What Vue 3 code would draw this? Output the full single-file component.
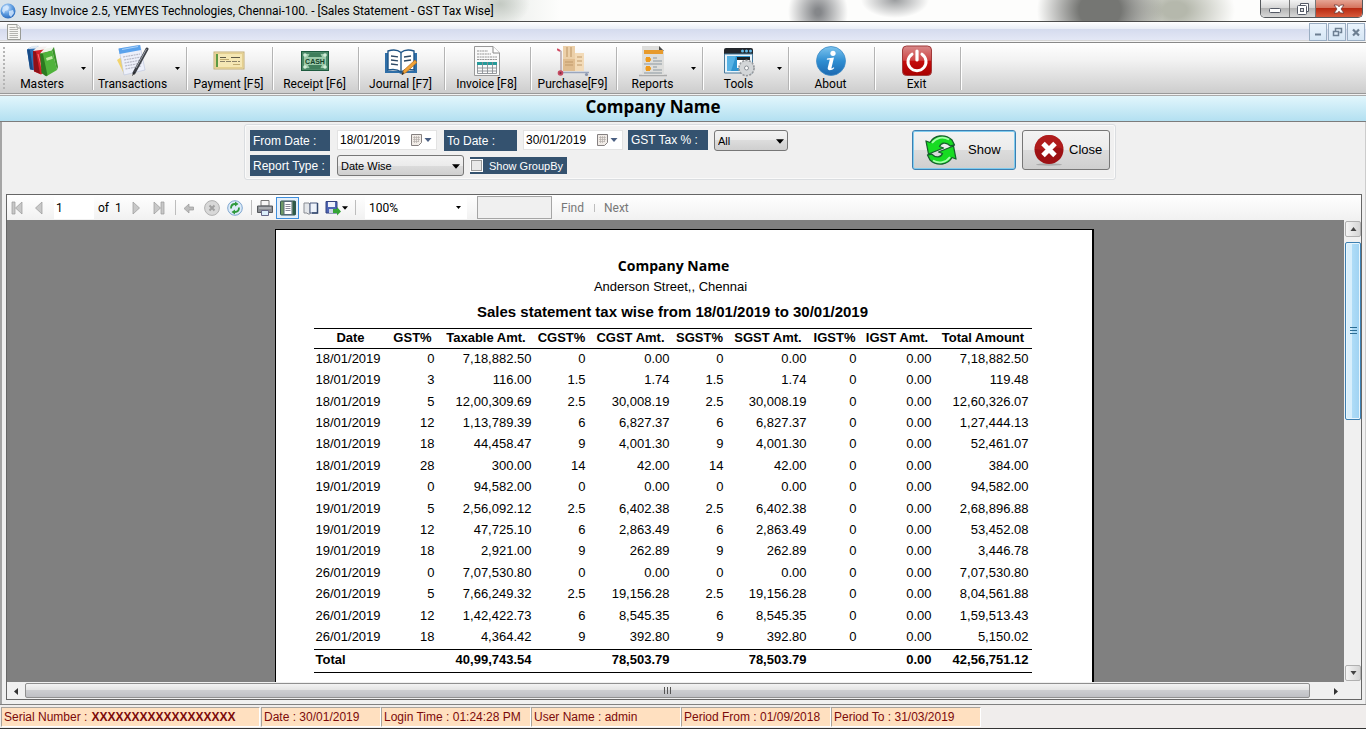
<script setup>
import { ref } from 'vue'

const tools = [
  { id: 'masters', label: 'Masters', menu: true },
  { id: 'transactions', label: 'Transactions', menu: true, wide: true },
  { id: 'payment', label: 'Payment [F5]' },
  { id: 'receipt', label: 'Receipt [F6]' },
  { id: 'journal', label: 'Journal [F7]' },
  { id: 'invoice', label: 'Invoice [F8]' },
  { id: 'purchase', label: 'Purchase[F9]' },
  { id: 'reports', label: 'Reports', menu: true },
  { id: 'tools', label: 'Tools', menu: true },
  { id: 'about', label: 'About' },
  { id: 'exit', label: 'Exit' },
]

const fromDate = ref('18/01/2019')
const toDate = ref('30/01/2019')
const gstTax = ref('All')
const reportType = ref('Date Wise')
const groupBy = ref(false)
const pageNo = ref('1')
const zoom = ref('100%')
const findText = ref('')

const columns = ['Date', 'GST%', 'Taxable Amt.', 'CGST%', 'CGST Amt.', 'SGST%', 'SGST Amt.', 'IGST%', 'IGST Amt.', 'Total Amount']

const rows = [
  ['18/01/2019', '0', '7,18,882.50', '0', '0.00', '0', '0.00', '0', '0.00', '7,18,882.50'],
  ['18/01/2019', '3', '116.00', '1.5', '1.74', '1.5', '1.74', '0', '0.00', '119.48'],
  ['18/01/2019', '5', '12,00,309.69', '2.5', '30,008.19', '2.5', '30,008.19', '0', '0.00', '12,60,326.07'],
  ['18/01/2019', '12', '1,13,789.39', '6', '6,827.37', '6', '6,827.37', '0', '0.00', '1,27,444.13'],
  ['18/01/2019', '18', '44,458.47', '9', '4,001.30', '9', '4,001.30', '0', '0.00', '52,461.07'],
  ['18/01/2019', '28', '300.00', '14', '42.00', '14', '42.00', '0', '0.00', '384.00'],
  ['19/01/2019', '0', '94,582.00', '0', '0.00', '0', '0.00', '0', '0.00', '94,582.00'],
  ['19/01/2019', '5', '2,56,092.12', '2.5', '6,402.38', '2.5', '6,402.38', '0', '0.00', '2,68,896.88'],
  ['19/01/2019', '12', '47,725.10', '6', '2,863.49', '6', '2,863.49', '0', '0.00', '53,452.08'],
  ['19/01/2019', '18', '2,921.00', '9', '262.89', '9', '262.89', '0', '0.00', '3,446.78'],
  ['26/01/2019', '0', '7,07,530.80', '0', '0.00', '0', '0.00', '0', '0.00', '7,07,530.80'],
  ['26/01/2019', '5', '7,66,249.32', '2.5', '19,156.28', '2.5', '19,156.28', '0', '0.00', '8,04,561.88'],
  ['26/01/2019', '12', '1,42,422.73', '6', '8,545.35', '6', '8,545.35', '0', '0.00', '1,59,513.43'],
  ['26/01/2019', '18', '4,364.42', '9', '392.80', '9', '392.80', '0', '0.00', '5,150.02'],
]

const totals = ['Total', '', '40,99,743.54', '', '78,503.79', '', '78,503.79', '', '0.00', '42,56,751.12']
</script>

<template>
  <div class="window">
    <header class="titlebar">
      <svg class="app-icon" viewBox="0 0 16 16" aria-hidden="true">
        <defs>
          <radialGradient id="globe" cx=".4" cy=".3" r=".8">
            <stop offset="0" stop-color="#cfe6ff" />
            <stop offset=".5" stop-color="#5b9be0" />
            <stop offset="1" stop-color="#1f5fb4" />
          </radialGradient>
        </defs>
        <circle cx="8" cy="8" r="7.5" fill="url(#globe)" />
        <path d="M3 4l4-2 2 2-1 3-3 1-1 3-2-3zM9 8l4-1 1 3-3 4-2-2z" fill="#d8ebff" opacity=".8" />
      </svg>
      <h1>Easy Invoice 2.5, YEMYES Technologies, Chennai-100. - [Sales Statement - GST Tax Wise]</h1>
      <div class="caption">
        <button type="button" class="cap-min" aria-label="Minimize">
          <svg viewBox="0 0 14 14"><rect x="1.5" y="6.5" width="11" height="4" rx="1" fill="#fff" stroke="#555a66" /></svg>
        </button>
        <button type="button" class="cap-max" aria-label="Restore">
          <svg viewBox="0 0 14 14">
            <path d="M4.500 3.500V1.500h8v8h-2" fill="#fff" stroke="#555a66" />
            <rect x="1.500" y="3.500" width="9" height="9" rx="1" fill="#fff" stroke="#555a66" />
            <rect x="4.500" y="6.500" width="3" height="3" fill="#ddd" stroke="#555a66" />
          </svg>
        </button>
        <button type="button" class="cap-close" aria-label="Close window">
          <svg viewBox="0 0 14 14"><path d="M2 3h3.500L7 4.800 8.500 3H12L9 7l3 4H8.500L7 9.200 5.500 11H2l3-4z" fill="#fff" stroke="#6b3a38" stroke-width=".8" /></svg>
        </button>
      </div>
    </header>

    <div class="menubar">
      <svg class="doc-icon" viewBox="0 0 14 16" aria-hidden="true">
        <path d="M.5.5h9.500l3.500 3.500v11.500H.5z" fill="#f6f6f3" stroke="#999b96" />
        <path d="M10 .5V4h3.500" fill="#fff" stroke="#999b96" />
        <path d="M2.500 3.500h6M2.500 5.500h8.500M2.500 7.500h8.500M2.500 9.500h8.500M2.500 11.500h8.500M2.500 13.500h8.500" stroke="#b4b4b0" />
      </svg>
      <div class="mdi">
        <button type="button" aria-label="Minimize document">
          <svg viewBox="0 0 16 16"><path d="M5 10.500h6" stroke="#6d7f92" stroke-width="2" /></svg>
        </button>
        <button type="button" aria-label="Restore document">
          <svg viewBox="0 0 16 16"><path d="M6.500 7V4.500h6v4H10.500" fill="none" stroke="#6d7f92" stroke-width="1.500" /><path d="M4.500 7.500h5v4h-5z" fill="none" stroke="#6d7f92" stroke-width="1.500" /></svg>
        </button>
        <button type="button" aria-label="Close document">
          <svg viewBox="0 0 16 16"><path d="M5 5.500l6 6M11 5.500l-6 6" stroke="#6d7f92" stroke-width="2.200" /></svg>
        </button>
      </div>
    </div>

    <nav class="toolbar">
      <span class="grip"></span>
      <button v-for="t in tools" :key="t.id" type="button" class="tool" :class="{ wide: t.wide }">
        <span class="face">
          <svg v-if="t.id === 'masters'" viewBox="0 0 32 32">
            <path d="M1 4.500L5 2l7-1 6 22-6 3-8-1.500z" fill="#2d6fb5" /><path d="M2 4l4-3 7-.5-3 3z" fill="#dfe9f3" /><path d="M1 4.500l3 .5 3 20-3-1z" fill="#174a86" />
            <path d="M7 6l11-2.500 6 20-9 6-7-3z" fill="#d3202a" /><path d="M7 6l4-4 10-.5-3 3z" fill="#f4f0ee" /><path d="M7 6l3 .8 4 22-6-2.500z" fill="#8e1118" /><path d="M12 9l4 15" stroke="#ff7474" />
            <path d="M14 8.500L26 5l5 20-11 6.500z" fill="#4fb33b" /><path d="M14 8.500L18 4l10-2-2 3.200z" fill="#eef4ea" /><path d="M14 8.500l3 .5 4.500 21.500-2 .5-4-3z" fill="#2c7a20" />
            <path d="M26 5l2-3 4 20-1 3z" fill="#3c952b" /><path d="M20 13l6-2 .8 2.800-6 2z" fill="#c4eba9" />
          </svg>
          <svg v-else-if="t.id === 'transactions'" viewBox="0 0 32 32">
            <path d="M0 15l6-4 4 17-3 1z" fill="#f3d46c" />
            <path d="M2 4l21-4 5 25-21 5z" fill="#edf0fa" stroke="#b9c2dc" stroke-width=".6" />
            <path d="M1.500 3.500L23 0l1 5-21.500 4z" fill="#5aa2ec" /><path d="M5 4.500l16-3" stroke="#a9d2fa" stroke-width="1.200" />
            <path d="M6 12l17-3M7 15l17-3M7.500 18l17-3M8 21l17-3M8.500 24l16-3" stroke="#b7b9c6" stroke-width="1.200" stroke-dasharray="2 .7" />
            <path d="M30 4L17 28" stroke="#3d4046" stroke-width="3" stroke-linecap="round" /><path d="M29.500 4L19 23" stroke="#9da2ab" stroke-width="1" /><path d="M17.500 27l-2 3.500" stroke="#222" stroke-width="1" />
          </svg>
          <svg v-else-if="t.id === 'payment'" viewBox="0 0 32 32">
            <rect x="1" y="7" width="30" height="17" fill="#f5e7b4" stroke="#c4ae76" /><rect x="2.500" y="8.500" width="27" height="14" fill="none" stroke="#e5d090" />
            <path d="M4 9v13" stroke="#5c9a45" stroke-width="2" /><path d="M7 12.500h6M18 12.500h9" stroke="#5f5a47" stroke-width="1.200" /><path d="M7 16.500h20" stroke="#8a8168" stroke-dasharray="5 1" /><path d="M7 14.500h9M20 19.500h7" stroke="#c0ab70" />
          </svg>
          <svg v-else-if="t.id === 'receipt'" viewBox="0 0 32 32">
            <rect x="2.500" y="6.500" width="27" height="19" fill="#4b8a68" stroke="#1d5a3e" /><rect x="5" y="9" width="22" height="14" fill="#9ccaaa" />
            <path d="M11 8h10l2 4H9zM9 20h14l-2 4H11z" fill="#3f7e5b" />
            <circle cx="6" cy="10" r="1.800" fill="#d1ecd7" /><circle cx="26" cy="10" r="1.800" fill="#d1ecd7" /><circle cx="6" cy="22" r="1.800" fill="#d1ecd7" /><circle cx="26" cy="22" r="1.800" fill="#d1ecd7" />
            <text x="16" y="18.500" class="cash" text-anchor="middle">CASH</text>
          </svg>
          <svg v-else-if="t.id === 'journal'" viewBox="0 0 32 32">
            <path d="M0 8h3v18h26V8h3v20H18l-2 1-2-1H0z" fill="#2f6fa8" />
            <path d="M3 6c5-1.500 10-1 13 1.500C19 5 24 4.500 29 6v19c-5-1-10-.5-13 2-3-2.500-8-3-13-2z" fill="#fff" stroke="#1f5688" stroke-width="1.400" />
            <path d="M16 7.500V27" stroke="#1f5688" stroke-width="1.400" />
            <path d="M6 11l7 .8M6 15l7 .8M6 19l7 .8M19 12l7-1M19 16l7-1" stroke="#2d4965" stroke-width="1.300" />
            <path d="M30 15l2 2.500-11 10-4 2 1.500-4z" fill="#f0a338" stroke="#b36a1a" stroke-width=".7" /><path d="M17 29.500l1.500-2" stroke="#333" stroke-width="1.500" />
          </svg>
          <svg v-else-if="t.id === 'invoice'" viewBox="0 0 32 32">
            <path d="M3.500 1.500H22l6.500 6.500v22.500h-25z" fill="#fafafa" stroke="#999" /><path d="M22 1.500V8h6.500" fill="#fff" stroke="#888" />
            <path d="M6 6h11M6 9h14M6 12h20M6 14.500h20" stroke="#929292" stroke-dasharray="2 .6" />
            <rect x="6" y="17" width="20" height="3" fill="#269a9a" />
            <path d="M6.500 20v8.500h19V20M6 23h20M6 26h20M11.500 17v11.500M16.500 17v11.500M21.500 17v11.500" fill="none" stroke="#8a8f94" stroke-width=".9" />
          </svg>
          <svg v-else-if="t.id === 'purchase'" viewBox="0 0 32 32">
            <path d="M6 1h12v13H6z" fill="#ecd0a9" /><path d="M6 14h12v12H6z" fill="#e0bd90" /><path d="M18 8h9v18h-9z" fill="#f3dbb8" />
            <path d="M10 2v10M14 2v10M8 17h8M8 20h8M20 12h5M20 16h5M20 20h5" stroke="#c09a6b" stroke-width="1.100" />
            <path d="M1 4.500l3 2V27" fill="none" stroke="#b7a6ad" stroke-width="1.500" /><path d="M0 4l3 2" stroke="#d34b63" stroke-width="2" />
            <path d="M4 27.500h28" stroke="#9aa6be" stroke-width="1.500" /><circle cx="3.500" cy="28" r="2.800" fill="#c64b62" /><circle cx="3.500" cy="28" r="1" fill="#7b2b3d" /><circle cx="29.500" cy="29.500" r="1.600" fill="#8994ab" />
          </svg>
          <svg v-else-if="t.id === 'reports'" viewBox="0 0 32 32">
            <path d="M2 30.500h28" stroke="#aaa" stroke-width="1.500" />
            <path d="M5 1h17l5 5v24H5z" fill="#dededc" /><path d="M22 1l5 5h-5z" fill="#4c4c4c" />
            <path d="M7 5h19v4H7z" fill="#e79a2c" />
            <path d="M9 12h4v5H9zM9 21h4v5H9z" fill="#ef9a1c" /><path d="M8.500 14.500h5.500M8.500 23.500h5.500" stroke="#ef9a1c" stroke-width="2.500" />
            <path d="M16 13h4M16 16h9M7 19h18M16 22h4M16 25h9M7 28h18" stroke="#8b97a0" />
          </svg>
          <svg v-else-if="t.id === 'tools'" viewBox="0 0 32 32">
            <path d="M1 5a2 2 0 012-2h25a2 2 0 012 2v4H1z" fill="#23262b" /><circle cx="19.500" cy="6" r="1.500" fill="#62b9e8" /><circle cx="23.500" cy="6" r="1.500" fill="#62b9e8" /><circle cx="27.500" cy="6" r="1.500" fill="#62b9e8" />
            <path d="M1.500 9h28v19h-28z" fill="#e9f4fb" stroke="#47799b" /><path d="M4 11h23v15H4z" fill="#2f95d0" /><path d="M4 11h9L8 26H4z" fill="#57b2e4" />
            <path d="M14 12h13v3H14z" fill="#1d2126" /><path d="M14 15h13v8H14z" fill="#fff" />
            <circle cx="23.500" cy="23" r="7.500" fill="#cfd2d4" stroke="#96999d" stroke-width="1.800" stroke-dasharray="2.200 1.200" /><circle cx="23.500" cy="23" r="6.800" fill="#d3d6d8" /><circle cx="23.500" cy="23" r="2" fill="#fff" stroke="#8b9197" />
          </svg>
          <svg v-else-if="t.id === 'about'" viewBox="0 0 32 32">
            <defs><linearGradient id="info" x1="0" y1="0" x2="0" y2="1"><stop offset="0" stop-color="#7dc4ee" /><stop offset=".5" stop-color="#2f8ed2" /><stop offset="1" stop-color="#1c68b0" /></linearGradient></defs>
            <circle cx="16" cy="16" r="14.500" fill="url(#info)" stroke="#3e8cc6" stroke-width=".8" />
            <circle cx="18" cy="8.300" r="2.600" fill="#fff" /><path d="M12 13.500l7-1-2.500 10.300c-.2 1 .8.800 2.300-.5l.5.800c-2.200 2.700-7.500 3.500-6.500-.5l2-8-3 .2z" fill="#fff" />
          </svg>
          <svg v-else viewBox="0 0 32 32">
            <defs><linearGradient id="power" x1="0" y1="0" x2="0" y2="1"><stop offset="0" stop-color="#d88a8a" /><stop offset=".48" stop-color="#cf4545" /><stop offset=".52" stop-color="#c40c0c" /><stop offset="1" stop-color="#a80000" /></linearGradient></defs>
            <rect x="1.500" y="1" width="29" height="29.500" rx="4" fill="url(#power)" stroke="#a03a3a" />
            <path d="M11 9.200a9 9 0 1010 0" fill="none" stroke="#fff" stroke-width="3" stroke-linecap="round" /><path d="M16 6v9" stroke="#fff" stroke-width="3.200" stroke-linecap="round" />
          </svg>
          <span>{{ t.label }}</span>
        </span>
        <span v-if="t.menu" class="drop"><svg viewBox="0 0 5 3"><path d="M0 0h5L2.500 3z" /></svg></span>
      </button>
    </nav>

    <div class="company">Company Name</div>

    <main class="work">
      <form class="filters" @submit.prevent>
        <div class="fields">
          <div class="line">
            <label for="from" class="tag">From Date :</label>
            <span class="date"><input id="from" v-model="fromDate" type="text" /><button type="button" aria-label="Open from-date calendar"><svg viewBox="0 0 22 12"><path d="M.5.5h10v8l-3 3h-7z" fill="#f1ece7" stroke="#858080" /><path d="M2 3.500h7M2 5.500h7M2 7.500h6M3.500 2v7M5.500 2v7M7.500 2v6" stroke="#b5afab" stroke-width=".7" /><path d="M13.500 4h7L17 8z" fill="#4a5f82" /></svg></button></span>
            <label for="to" class="tag to">To Date :</label>
            <span class="date"><input id="to" v-model="toDate" type="text" /><button type="button" aria-label="Open to-date calendar"><svg viewBox="0 0 22 12"><path d="M.5.5h10v8l-3 3h-7z" fill="#f1ece7" stroke="#858080" /><path d="M2 3.500h7M2 5.500h7M2 7.500h6M3.500 2v7M5.500 2v7M7.500 2v6" stroke="#b5afab" stroke-width=".7" /><path d="M13.500 4h7L17 8z" fill="#4a5f82" /></svg></button></span>
            <label for="gst" class="tag gst">GST Tax % :</label>
            <span class="combo small"><select id="gst" v-model="gstTax"><option>All</option></select><svg viewBox="0 0 7 4"><path d="M0 0h7L3.500 4z" /></svg></span>
          </div>
          <div class="line">
            <label for="rtype" class="tag">Report Type :</label>
            <span class="combo"><select id="rtype" v-model="reportType"><option>Date Wise</option></select><svg viewBox="0 0 7 4"><path d="M0 0h7L3.500 4z" /></svg></span>
            <label class="check"><input v-model="groupBy" type="checkbox" />Show GroupBy</label>
          </div>
        </div>
        <div class="actions">
          <button type="submit" class="act show">
            <svg viewBox="0 0 32 32">
              <g id="turn">
                <path d="M1 7l4 1.500C9 1 20-.5 27 6l2.500 5-4 1C21 7.500 16 8.500 14.500 12.500l4 1.500L3.500 20z" fill="#17dc22" stroke="#14602a" stroke-width="1.300" stroke-linejoin="round" />
                <path d="M7 9C11 3.500 18 2 24 5.500" fill="none" stroke="#a5ffaa" stroke-width="1.800" />
              </g>
              <use href="#turn" transform="rotate(180 16 16)" />
            </svg>
            <span>Show</span>
          </button>
          <button type="button" class="act close">
            <svg viewBox="0 0 32 32">
              <ellipse cx="16" cy="30.500" rx="13" ry="1.200" fill="#aaa" />
              <circle cx="16" cy="15.500" r="14.500" fill="#9d1114" /><path d="M2 15a14 14 0 0128 0c-8-4-18 3-28 0z" fill="#b8211f" opacity=".7" />
              <path d="M10 9.500l12 12M22 9.500l-12 12" stroke="#fff" stroke-width="5" />
            </svg>
            <span>Close</span>
          </button>
        </div>
      </form>

      <section class="viewer">
        <div class="vbar">
          <button type="button" class="vb first" aria-label="First page"><svg viewBox="0 0 16 16"><path d="M3 2h3v12H3zM13 2v12L6.500 8z" fill="#c8c8c8" stroke="#999" stroke-width=".7" /></svg></button>
          <button type="button" class="vb" aria-label="Previous page"><svg viewBox="0 0 16 16"><path d="M11 2v12L4.500 8z" fill="#c8c8c8" stroke="#999" stroke-width=".7" /></svg></button>
          <input v-model="pageNo" class="pageno" type="text" aria-label="Current page" />
          <span class="of">of&nbsp; 1</span>
          <button type="button" class="vb" aria-label="Next page"><svg viewBox="0 0 16 16"><path d="M5 2v12l6.500-6z" fill="#c8c8c8" stroke="#999" stroke-width=".7" /></svg></button>
          <button type="button" class="vb" aria-label="Last page"><svg viewBox="0 0 16 16"><path d="M10 2h3v12h-3zM3 2v12l6.500-6z" fill="#c8c8c8" stroke="#999" stroke-width=".7" /></svg></button>
          <i class="vsep"></i>
          <button type="button" class="vb" aria-label="Back"><svg viewBox="0 0 16 16"><path d="M3 8.500l5-4.500v3h4.500v3H8v3z" fill="#bdbdbd" stroke="#999" stroke-width=".7" /></svg></button>
          <button type="button" class="vb" aria-label="Stop"><svg viewBox="0 0 16 16"><circle cx="8" cy="8" r="7.400" fill="#d8d8d8" stroke="#b0b0b0" /><path d="M5.500 5.500l5 5M10.500 5.500l-5 5" stroke="#a0a0a0" stroke-width="2" /></svg></button>
          <button type="button" class="vb" aria-label="Refresh"><svg viewBox="0 0 16 16"><circle cx="8" cy="8" r="7.300" fill="#dcebf8" stroke="#7fa6d0" /><path d="M4 8.500c0-3 2-4.500 4-4.500M12 7.500c0 3-2 4.500-4 4.500" fill="none" stroke="#2f9a3d" stroke-width="1.800" /><path d="M8 1.500L11.500 4 8 6.500zM8 9.500v5L4.500 12z" fill="#2f9a3d" /></svg></button>
          <i class="vsep"></i>
          <button type="button" class="vb" aria-label="Print"><svg viewBox="0 0 16 16"><path d="M4 .5h8V6H4z" fill="#f7f7f7" stroke="#777" /><path d="M.5 6h15v6.500H.5z" fill="#8a8d92" stroke="#55585c" /><path d="M2 8h12" stroke="#c9cbce" /><path d="M4.500 10.500h7v5h-7z" fill="#dbeefa" stroke="#668" /></svg></button>
          <button type="button" class="vb on" aria-label="Print layout"><svg viewBox="0 0 16 16"><rect x=".5" y="1" width="15" height="14" rx="1" fill="#6f9a66" stroke="#355" /><path d="M13 1h2.500v14H13z" fill="#2f5a4a" /><path d="M4 1.500h8v13H4z" fill="#fff" stroke="#567" /><path d="M5.500 4.500h5M5.500 6.500h5M5.500 8.500h5M5.500 10.500h5" stroke="#889" /></svg></button>
          <button type="button" class="vb" aria-label="Page setup"><svg viewBox="0 0 16 16"><path d="M1 3h5l1 2v9H5l-1-1H1z" fill="#e3e6ea" stroke="#8a8d94" /><path d="M7 3h7.500v10H7z" fill="#edf2fa" stroke="#4c5d80" /><path d="M14.500 3v10H9" fill="none" stroke="#33486f" stroke-width="1.500" /></svg></button>
          <button type="button" class="vb export" aria-label="Export"><svg viewBox="0 0 16 16"><path d="M1 1.500h11V13H1z" fill="#4d64b5" stroke="#34437f" /><path d="M3 2h7v5H3z" fill="#eef1fb" /><path d="M4 9h6v4H4z" fill="#cdd3e8" /><path d="M8 9h4V7l4 4.500-4 4V13H8z" fill="#35a537" /></svg><svg class="tiny" viewBox="0 0 5 3"><path d="M0 0h5L2.500 3z" /></svg></button>
          <i class="vsep"></i>
          <span class="zoom"><select v-model="zoom" aria-label="Zoom"><option>100%</option></select><svg viewBox="0 0 5 3"><path d="M0 0h5L2.500 3z" /></svg></span>
          <input v-model="findText" class="find" type="text" aria-label="Find text" />
          <button type="button" class="link">Find</button>
          <i class="vsep short"></i>
          <button type="button" class="link">Next</button>
        </div>

        <div class="stage">
          <div class="canvas">
            <article class="page">
              <h2>Company Name</h2>
              <p>Anderson Street,, Chennai</p>
              <h3>Sales statement tax wise from 18/01/2019 to 30/01/2019</h3>
              <table>
                <colgroup><col v-for="(c, i) in columns" :key="c" :class="'c' + i" /></colgroup>
                <thead><tr><th v-for="c in columns" :key="c" scope="col">{{ c }}</th></tr></thead>
                <tbody><tr v-for="(r, i) in rows" :key="i"><td v-for="(v, j) in r" :key="j">{{ v }}</td></tr></tbody>
                <tfoot><tr><td v-for="(v, j) in totals" :key="j">{{ v }}</td></tr></tfoot>
              </table>
            </article>
          </div>
          <div class="vscroll">
            <button type="button" aria-label="Scroll up"><svg viewBox="0 0 6 4"><path d="M0 4h6L3 0z" /></svg></button>
            <div class="vtrack"><div class="vthumb"><i></i><i></i><i></i></div></div>
            <button type="button" aria-label="Scroll down"><svg viewBox="0 0 6 4"><path d="M0 0h6L3 4z" /></svg></button>
          </div>
        </div>
        <div class="hscroll">
          <button type="button" aria-label="Scroll left"><svg viewBox="0 0 4 7"><path d="M4 0v7L0 3.500z" /></svg></button>
          <div class="htrack"><div class="hthumb"><i></i><i></i><i></i></div></div>
          <button type="button" aria-label="Scroll right"><svg viewBox="0 0 4 7"><path d="M0 0v7l4-3.500z" /></svg></button>
        </div>
      </section>
    </main>

    <footer class="status">
      <span class="s1">Serial Number :<b>XXXXXXXXXXXXXXXXXX</b></span>
      <span class="s2">Date : 30/01/2019</span>
      <span class="s3">Login Time : 01:24:28 PM</span>
      <span class="s3">User Name : admin</span>
      <span class="s3">Period From : 01/09/2018</span>
      <span class="s3">Period To : 31/03/2019</span>
    </footer>
  </div>
</template>

<style>
body { margin: 0; background: #f0f0f0; }
</style>

<style scoped>
* { box-sizing: border-box; }
button, input, select { font: inherit; color: inherit; margin: 0; padding: 0; border: 0; border-radius: 0; background: none; min-width: 0; }
select { appearance: none; }
svg { display: block; flex: none; }
.window { display: flex; flex-direction: column; height: 100vh; overflow: hidden; background: #f0f0f0; color: #000; font: 12px/16px Roboto, "Open Sans", sans-serif; border-bottom: 1px solid #333; }

.titlebar { flex: none; display: flex; align-items: center; height: 22px; border-bottom: 1px solid #4c4c4c;
  background:
    radial-gradient(30px 22px at 500px 4px, #c3c9c2, transparent),
    radial-gradient(30px 34px at 818px 12px, #85878a 10%, transparent),
    radial-gradient(34px 18px at 895px 0, #9b9d9f, transparent),
    radial-gradient(70px 60px at 1100px 10px, #757673 30%, transparent 90%),
    radial-gradient(60px 40px at 1175px 10px, #b5b8ac 20%, transparent),
    linear-gradient(90deg, #d7e2ea 0, #d9dedb 300px, #e2e6e2 470px, #fdfdfc 560px); }
.app-icon { width: 16px; height: 16px; }
.titlebar h1 { margin: 0 0 0 6px; font-size: 12px; font-weight: 400; line-height: 20px; white-space: nowrap; }
.caption { display: flex; align-self: flex-start; margin: 0 3px 0 auto; border: 1px solid #55585c; border-top: 0; border-radius: 0 0 5px 5px; overflow: hidden; }
.caption button { width: 28px; height: 17px; display: grid; place-items: center; background: linear-gradient(#f3f3f3, #d3d3d3 50%, #b4b4b4 50%, #d8d8d8); }
.caption svg { width: 14px; height: 14px; }
.caption .cap-max { width: 27px; border: solid #777; border-width: 0 1px; }
.caption .cap-close { width: 46px; background: linear-gradient(#e6a594, #d5745e 45%, #b92b12 50%, #d7593a); }

.menubar { flex: none; display: flex; align-items: center; justify-content: space-between; height: 21px; padding: 0 1px 1px 7px; background: linear-gradient(#fff, #e9edf6 35%, #d5dbee 36%, #e3e7f5 88%, #aaa 89%, #f4f4f4 95%); border-bottom: 1px solid #888; }
.doc-icon { width: 14px; height: 16px; }
.mdi { display: flex; gap: 1px; }
.mdi button { width: 18px; height: 18px; border: 1px solid #9aadc2; background: linear-gradient(#eaf3fc, #d6e6f5); }
.mdi svg { width: 16px; height: 16px; }

.toolbar { flex: none; display: flex; height: 51px; padding: 4px 4px 3px 2px; background: linear-gradient(#fff, #f2f2f2 35%, #cdcdcd); border-bottom: 1px solid #999; }
.grip { width: 2px; margin: 0 2px 0 1px; background: repeating-linear-gradient(#b5b5b5 0 2px, transparent 2px 4px); }
.tool { display: flex; width: 86px; padding-right: 4px; border-right: 1px solid #fff; box-shadow: inset -1px 0 #b4b4b4; }
.tool:first-of-type { width: 87px; }
.tool.wide { width: 94px; }
.face { flex: 1; display: flex; flex-direction: column; align-items: center; margin-top: -2px; white-space: nowrap; }
.face svg { width: 32px; height: 32px; }
.face > span { line-height: 15px; }
.drop { width: 12px; display: grid; place-items: center; }
.drop svg { width: 5px; height: 3px; }
.cash { font: bold 7px "Liberation Sans", sans-serif; fill: #123f28; }

.company { flex: none; height: 27px; margin-top: 1px; border: solid; border-width: 1px 0; border-color: #aaa transparent #7c7c7c; background: linear-gradient(#e2f6fc, #b3e0f1); text-align: center; padding-right: 60px; font: bold 17px/22px "Open Sans", sans-serif; }

.work { flex: 1; min-height: 0; display: flex; flex-direction: column; padding: 2px 3px 4px 4px; border-left: 2px solid #a5a5a5; border-right: 1px solid #ccc; background: #f0f0f0; }
.filters { flex: none; align-self: center; display: flex; justify-content: space-between; width: 872px; max-width: 100%; margin: 0 8px 14px 0; height: 56px; padding: 5px 5px 4px; border: 1px solid #dadde0; border-radius: 3px; box-shadow: inset 0 0 0 1px #fafafa; font: 12px/16px "Liberation Sans", Arial, sans-serif; }
.fields { display: flex; flex-direction: column; gap: 4px; }
.line { display: flex; height: 21px; }
.tag { display: flex; align-items: center; width: 80px; height: 21px; padding-left: 3px; background: #34526f; color: #fff; white-space: nowrap; }
.tag.to { width: 73px; margin-left: 7px; }
.tag.gst { margin-left: 5px; height: 20px; }
.line .date { display: flex; align-items: center; width: 100px; height: 20px; margin-left: 7px; padding: 0 3px 0 2px; background: #fff; border: 1px solid #e3e3e3; }
.line .tag.to + .date { margin-left: 6px; }
.date input { flex: 1; width: 0; }
.date svg { width: 22px; height: 12px; }
.combo { position: relative; display: flex; width: 127px; height: 21px; margin-left: 7px; font-size: 11px; }
.combo.small { width: 74px; margin-left: 6px; }
.combo select { flex: 1; padding-left: 3px; border: 1px solid #777; border-radius: 3px; background: linear-gradient(#f3f3f3, #ebebeb 50%, #dcdcdc 50%, #cfcfcf); }
.combo svg { position: absolute; right: 4px; top: 9px; width: 8px; height: 5px; pointer-events: none; }
.check { display: flex; align-items: center; align-self: center; height: 17px; width: 97px; margin-left: 6px; background: #34526f; color: #fff; font-size: 11px; white-space: nowrap; }
.check input { appearance: none; flex: none; width: 13px; height: 13px; margin: 0 6px 0 0; border: 1px solid #fff; box-shadow: inset 0 0 0 1px #9a9a9a; background: #e8e8e8; }
.actions { display: flex; gap: 6px; align-items: flex-start; }
.act { display: flex; align-items: center; height: 40px; border: 1px solid #777; border-radius: 3px; background: linear-gradient(#f3f3f3, #ebebeb 50%, #dcdcdc 50%, #cfcfcf); font-size: 13px; }
.act svg { width: 32px; height: 32px; }
.act.show { width: 104px; padding-left: 12px; gap: 11px; border-color: #3c7fb1; box-shadow: inset 0 0 0 1px #7fcbee; }
.act.close { width: 88px; padding-left: 10px; gap: 4px; }

.viewer { flex: 1; min-height: 0; display: flex; flex-direction: column; border: 1px solid #666; }
.vbar { flex: none; display: flex; align-items: center; height: 25px; background: linear-gradient(#fff, #f1f1f1); }
.vb { display: grid; place-items: center; width: 23px; height: 22px; }
.vb.first { width: 20px; }
.vb svg { width: 16px; height: 16px; }
.vb.on { border: 1px solid #3f8edc; background: #e4effa; }
.vb.export { display: flex; align-items: center; width: 28px; gap: 1px; padding-left: 3px; }
.vb .tiny { width: 6px; height: 4px; }
.pageno { width: 40px; height: 23px; margin-left: 4px; padding-left: 2px; background: #fff; }
.of { width: 26px; margin: 0 0 0 4px; white-space: nowrap; }
.vsep { width: 1px; height: 15px; margin: 0 1px 0 5px; background: #bdbdbd; }
.vsep.short { height: 8px; margin: 0 9px 0 10px; }
.zoom { position: relative; display: flex; width: 102px; height: 23px; margin-left: 8px; background: #fff; }
.zoom select { flex: 1; padding-left: 4px; }
.zoom svg { position: absolute; right: 6px; top: 10px; width: 5px; height: 3px; pointer-events: none; }
.find { width: 75px; height: 23px; margin: 0 9px 0 10px; border: 1px solid #a5a5a5; background: #f0f0f0; }
.link { color: #777; }

.stage { flex: 1; min-height: 0; display: flex; }
.canvas { flex: 1; min-width: 0; overflow: hidden; padding: 9px 0 0 17px; background: #808080; }
.page { width: 819px; max-width: 100%; min-height: 1056px; margin: 0 auto; padding: 26px 38px; background: #fff; border: 1px solid #000; border-right-width: 2px; font: 13px/16px "Liberation Sans", Arial, sans-serif; }
.page h2 { margin: 0; padding-right: 20px; text-align: center; font: bold 14px/20px "Open Sans", sans-serif; }
.page p { margin: 2px 0 0; padding-right: 26px; text-align: center; line-height: 18px; }
.page h3 { margin: 6px 0 0; padding-right: 22px; text-align: center; font-size: 15px; line-height: 20px; white-space: nowrap; }
table { width: 718px; height: 345px; margin-top: 6px; table-layout: fixed; border-collapse: collapse; border-bottom: 1px solid #000; }
.c0 { width: 74px; }
.c1, .c7 { width: 50px; }
.c2, .c9 { width: 97px; }
.c3, .c5 { width: 54px; }
.c4 { width: 84px; }
.c6 { width: 83px; }
.c8 { width: 75px; }
th, td { padding: 0 3px 2px 0; text-align: right; white-space: nowrap; }
th { height: 20px; padding: 0 0 2px; text-align: center; }
td:first-child { padding: 0 0 2px 2px; text-align: left; }
thead tr { border-top: 1px solid #000; border-bottom: 1px solid #000; }
tfoot tr { height: 23px; border-top: 1px solid #000; font-weight: 700; }
tfoot td, tfoot td:first-child { padding-bottom: 3px; }

.vscroll { width: 17px; display: flex; flex-direction: column; padding: 1px 0 1px 1px; background: #f0f0f0; }
.vscroll button { height: 16px; display: grid; place-items: center; border: 1px solid #b0b0b0; border-radius: 2px; background: linear-gradient(90deg, #f5f5f5, #d5d5d5); }
.vscroll svg { width: 7px; height: 4px; fill: #444; }
.vtrack { flex: 1; padding-top: 5px; }
.vthumb { height: 42%; display: flex; flex-direction: column; align-items: center; justify-content: center; gap: 2px; border: 1px solid #3c7fb1; border-radius: 2px; box-shadow: inset 0 0 0 1px #e8f6fd; background: linear-gradient(90deg, #d8effc 45%, #aedcf7 46%, #9fd2f2); }
.vthumb i { width: 7px; height: 1px; background: #2c6d94; }
.hscroll { flex: none; display: flex; align-items: stretch; height: 17px; padding: 1px 17px 0 0; background: #f0f0f0; }
.hscroll button { width: 17px; display: grid; place-items: center; }
.hscroll svg { width: 4px; height: 7px; fill: #333; }
.htrack { flex: 1; padding: 0 17px 0 1px; }
.hthumb { height: 15px; display: flex; align-items: center; justify-content: center; gap: 2px; border: 1px solid #8f8f8f; border-radius: 2px; background: linear-gradient(#f3f3f3, #e3e3e3 48%, #cccdd0 50%, #bfc0c4); }
.hthumb i { width: 1px; height: 7px; background: #555; }

.status { flex: none; display: flex; height: 24px; padding: 2px 0 1px 1px; border-top: 1px solid #808080; background: #f0edec; color: #7c0a0a; font: 12px/18px "Liberation Sans", Arial, sans-serif; white-space: nowrap; }
.status span { width: 150px; padding-left: 2px; border: solid; border-width: 1px; border-color: #a9a39c #fff #fff #a9a39c; background: #ffe0c0; }
.status .s1 { width: 259px; margin-right: 1px; }
.status .s2 { width: 120px; }
.status b { margin-left: 4px; }
</style>
